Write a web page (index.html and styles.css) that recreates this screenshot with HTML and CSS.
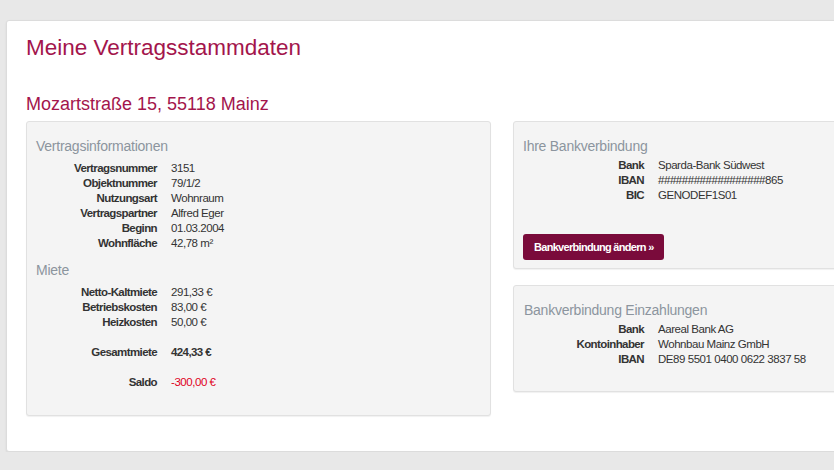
FILE: index.html
```html
<!DOCTYPE html>
<html lang="de">
<head>
    <meta charset="UTF-8">
    <meta name="viewport" content="width=device-width, initial-scale=1.0">
    <title>Meine Vertragsstammdaten</title>
    <link rel="stylesheet" href="styles.css">
</head>
<body>
<div class="panel">
    <h1 class="page-title">Meine Vertragsstammdaten</h1>
    <h2 class="address">Mozartstraße 15, 55118 Mainz</h2>

    <div class="columns">
        <div class="col">
            <div class="well well-tall">
                <h3>Vertragsinformationen</h3>
                <dl class="data">
                    <div class="row"><dt>Vertragsnummer</dt><dd>3151</dd></div>
                    <div class="row"><dt>Objektnummer</dt><dd>79/1/2</dd></div>
                    <div class="row"><dt>Nutzungsart</dt><dd>Wohnraum</dd></div>
                    <div class="row"><dt>Vertragspartner</dt><dd>Alfred Eger</dd></div>
                    <div class="row"><dt>Beginn</dt><dd>01.03.2004</dd></div>
                    <div class="row"><dt>Wohnfläche</dt><dd>42,78 m²</dd></div>
                </dl>

                <h3 class="section">Miete</h3>
                <dl class="data">
                    <div class="row"><dt>Netto-Kaltmiete</dt><dd>291,33 €</dd></div>
                    <div class="row"><dt>Betriebskosten</dt><dd>83,00 €</dd></div>
                    <div class="row"><dt>Heizkosten</dt><dd>50,00 €</dd></div>
                    <div class="row spaced"><dt>Gesamtmiete</dt><dd class="strong">424,33 €</dd></div>
                    <div class="row spaced"><dt>Saldo</dt><dd class="negative">-300,00 €</dd></div>
                </dl>
            </div>
        </div>

        <div class="col">
            <div class="well well-button">
                <h3>Ihre Bankverbindung</h3>
                <dl class="data data-tight">
                    <div class="row"><dt>Bank</dt><dd>Sparda-Bank Südwest</dd></div>
                    <div class="row"><dt>IBAN</dt><dd>##################865</dd></div>
                    <div class="row"><dt>BIC</dt><dd>GENODEF1S01</dd></div>
                </dl>
                <button class="btn-primary">Bankverbindung ändern »</button>
            </div>

            <div class="well">
                <h3>Bankverbindung Einzahlungen</h3>
                <dl class="data data-tight">
                    <div class="row"><dt>Bank</dt><dd>Aareal Bank AG</dd></div>
                    <div class="row"><dt>Kontoinhaber</dt><dd>Wohnbau Mainz GmbH</dd></div>
                    <div class="row"><dt>IBAN</dt><dd>DE89 5501 0400 0622 3837 58</dd></div>
                </dl>
            </div>
        </div>
    </div>
</div>
</body>
</html>
```

FILE: styles.css
```css
* {
    box-sizing: border-box;
    margin: 0;
    padding: 0;
}

html, body {
    overflow: hidden;
}

body {
    font-family: "Liberation Sans", Arial, sans-serif;
    color: #333;
    background-color: #e8e8e8;
    padding: 20px 0 0 6px;
}

.panel {
    width: 992px;
    background-color: #fff;
    border: 1px solid #dcdcdc;
    border-radius: 3px;
    box-shadow: 0 1px 2px rgba(0,0,0,0.08);
    padding: 15px 19px 35px 19px;
}

.page-title {
    font-size: 22.5px;
    font-weight: normal;
    line-height: 24px;
    color: #a3154c;
}

.address {
    font-size: 18px;
    font-weight: normal;
    line-height: 20px;
    color: #a3154c;
    margin: 34px 0 7px;
}

.columns {
    display: grid;
    grid-template-columns: 465px 465px;
    gap: 22px;
    align-items: start;
}

.well {
    background-color: #f4f4f4;
    border: 1px solid #e1e1e1;
    border-radius: 3px;
    box-shadow: 0 1px 1px rgba(0,0,0,0.06);
    padding: 16px 10px 24px;
}

.well-tall {
    padding: 16px 9px 25px;
}

.well-button {
    padding: 16px 10px 8px 9px;
    margin-bottom: 16px;
}

.well h3 {
    font-size: 14px;
    font-weight: normal;
    line-height: 16px;
    letter-spacing: -0.25px;
    color: #8c959e;
}

.well h3.section {
    margin-top: 11px;
}

.data {
    margin-top: 7px;
    font-size: 11.5px;
    line-height: 15px;
}

.data-tight {
    margin-top: 4px;
}

.data .row {
    display: grid;
    grid-template-columns: 120px auto;
    column-gap: 14px;
}

.well-tall .data .row,
.well-button .data .row {
    grid-template-columns: 121px auto;
}

.data .row.spaced {
    margin-top: 15px;
}

.data dt {
    font-weight: bold;
    text-align: right;
    letter-spacing: -0.6px;
}

.data dd {
    letter-spacing: -0.45px;
}

.data dd.strong {
    font-weight: bold;
    letter-spacing: -0.6px;
}

.data dd.negative {
    color: #e0001b;
}

.btn-primary {
    display: block;
    height: 26px;
    margin-top: 31px;
    font-family: inherit;
    font-size: 11px;
    font-weight: bold;
    letter-spacing: -0.7px;
    line-height: 16px;
    color: #fff;
    background-color: #7a0b3b;
    border: none;
    border-radius: 3px;
    padding: 0 10px 0 11px;
    cursor: pointer;
}
```
